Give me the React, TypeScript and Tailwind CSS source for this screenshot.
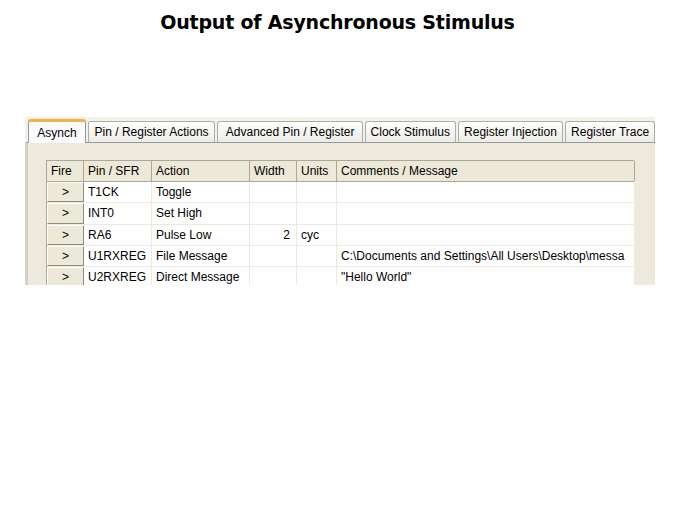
import React from 'react'

const tabs = [
  { label: 'Asynch', w: 'w-[58px]', active: true },
  { label: 'Pin / Register Actions', w: 'w-[128px]' },
  { label: 'Advanced Pin / Register', w: 'w-[146px]' },
  { label: 'Clock Stimulus', w: 'w-[91px]' },
  { label: 'Register Injection', w: 'w-[106px]' },
  { label: 'Register Trace', w: 'w-[90px]' },
]

const cols = [
  { label: 'Fire', w: 'w-[37px]' },
  { label: 'Pin / SFR', w: 'w-[68px]' },
  { label: 'Action', w: 'w-[98px]' },
  { label: 'Width', w: 'w-[47px]' },
  { label: 'Units', w: 'w-[40px]' },
  { label: 'Comments / Message', w: 'w-[298px]' },
]

const rows = [
  { pin: 'T1CK', action: 'Toggle', width: '', units: '', msg: '' },
  { pin: 'INT0', action: 'Set High', width: '', units: '', msg: '' },
  { pin: 'RA6', action: 'Pulse Low', width: '2', units: 'cyc', msg: '' },
  { pin: 'U1RXREG', action: 'File Message', width: '', units: '', msg: 'C:\\Documents and Settings\\All Users\\Desktop\\messa' },
  { pin: 'U2RXREG', action: 'Direct Message', width: '', units: '', msg: '"Hello World"' },
]

export default function App() {
  return (
    <div className="w-[675px] h-[506px] bg-white overflow-hidden">
      {/* Slide title */}
      <h1 className="pt-[11px] h-[22px] box-content text-center text-[19px] leading-[22px] font-bold text-black font-['DejaVu_Sans',Verdana,sans-serif] tracking-[-0.2px]">
        Output of Asynchronous Stimulus
      </h1>

      {/* Screenshot of the stimulus dialog */}
      <div className="ml-[25px] mt-[84px] w-[630px] h-[168px] overflow-hidden bg-[#F3F1E8] font-['Liberation_Sans',Arial,sans-serif] text-[12px] text-black">
        <div className="flex items-end h-[25px] pl-[3px] gap-[2px]">
          {tabs.map((t) =>
            t.active ? (
              <div
                key={t.label}
                className={`${t.w} h-[24px] relative z-10 -mb-px bg-[#FCFCFE] border border-b-0 border-[#919B9C] rounded-t-[3px] border-t-[3px] border-t-[#F5B043] flex items-center justify-center leading-none`}
              >
                {t.label}
              </div>
            ) : (
              <div
                key={t.label}
                className={`${t.w} h-[21px] bg-gradient-to-b from-white to-[#ECEBE6] border border-b-0 border-[#A8AEB0] rounded-t-[3px] flex items-center justify-center leading-none whitespace-nowrap`}
              >
                {t.label}
              </div>
            ),
          )}
        </div>

        <div className="h-[143px] border-l-[3px] border-t border-l-[#D4D2C8] border-t-[#919B9C] bg-[#EDEADD] pl-[18px] pt-[17px]">
          <div className="w-[588px] bg-white border-l border-t border-[#ACA899]">
            <div className="flex h-[21px] bg-[#ECE9D8] border-b border-[#ACA899]">
              {cols.map((c) => (
                <div key={c.label} className={`${c.w} shrink-0 border-r border-[#ACA899] px-[4px] flex items-center leading-none`}>
                  {c.label}
                </div>
              ))}
            </div>
            {rows.map((r) => (
              <div key={r.pin} className="flex h-[21.3px] border-b border-[#ECEADF]">
                <div className="w-[37px] shrink-0 bg-[#ECE9D8] border-t border-l border-t-white border-l-white border-r border-b border-r-[#8E8B7E] border-b-[#8E8B7E] flex items-center justify-center leading-none">
                  &gt;
                </div>
                <div className="w-[68px] shrink-0 border-r border-[#ECEADF] px-[4px] flex items-center leading-none">{r.pin}</div>
                <div className="w-[98px] shrink-0 border-r border-[#ECEADF] px-[4px] flex items-center leading-none">{r.action}</div>
                <div className="w-[47px] shrink-0 border-r border-[#ECEADF] px-[6px] flex items-center justify-end leading-none">{r.width}</div>
                <div className="w-[40px] shrink-0 border-r border-[#ECEADF] px-[4px] flex items-center leading-none">{r.units}</div>
                <div className="w-[298px] shrink-0 px-[4px] flex items-center leading-none whitespace-nowrap overflow-hidden">{r.msg}</div>
              </div>
            ))}
          </div>
        </div>
      </div>
    </div>
  )
}
